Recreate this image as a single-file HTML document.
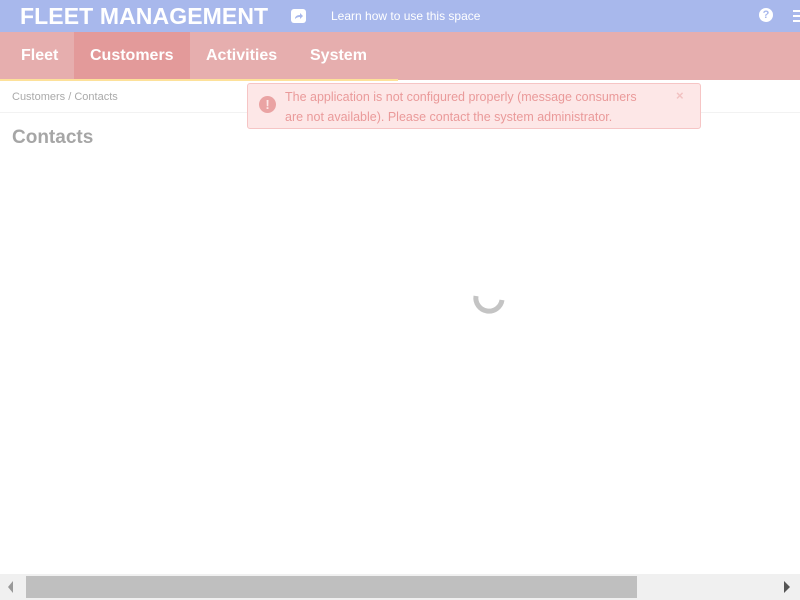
<!DOCTYPE html>
<html><head><style>
*{margin:0;padding:0;box-sizing:border-box}
body{width:800px;height:600px;overflow:hidden;background:#fff;font-family:"Liberation Sans",sans-serif;position:relative}
.top{position:absolute;left:0;top:0;width:800px;height:32px;background:#a8b8ec;color:#fff}
.title{position:absolute;left:20px;top:3px;font-size:23px;font-weight:bold;letter-spacing:0.1px}
.share{position:absolute;left:291px;top:9px;width:15px;height:14px;background:#fff;border-radius:3px}
.learn{position:absolute;left:331px;top:9px;font-size:12px}
.help{position:absolute;left:759px;top:8px;width:14px;height:14px;border-radius:50%;background:#fff;color:#a8b8ec;font-size:11px;font-weight:bold;text-align:center;line-height:14px}
.menu{position:absolute;left:793px;top:10px;width:8px;height:12px;border-top:2px solid #fff;border-bottom:2px solid #fff}
.menu:after{content:"";position:absolute;left:0;top:3px;width:8px;height:2px;background:#fff}
.nav{position:absolute;left:0;top:32px;width:800px;height:48px;background:#e6aeae}
.nav span{position:absolute;top:0;height:48px;line-height:48px;color:#fff;font-weight:bold;font-size:16px}
.act{background:#e39a9a}
.yl{position:absolute;left:0;top:79px;width:398px;height:2px;background:#fde19a}
.crumb{position:absolute;left:12px;top:91px;font-size:11px;color:#aaa}
.hr{position:absolute;left:0;top:112px;width:800px;height:1px;background:#f2f2f2}
h1{position:absolute;left:12px;top:127px;font-size:19px;color:#a6a6a6;font-weight:bold}
.alert{position:absolute;left:247px;top:83px;width:454px;height:46px;background:#fde7e7;border:1px solid #f6c5c5;border-radius:3px;color:#ea9a9a;font-size:12.5px;line-height:20px;padding:3px 45px 0 37px}
.ic{position:absolute;left:11px;top:12px;width:17px;height:17px;border-radius:50%;background:#eaa3a3;color:#fde7e7;font-weight:bold;font-size:13px;text-align:center;line-height:17px}
.x{position:absolute;left:428px;top:2px;color:#f2c2c2;font-size:13px;font-weight:bold}
.sb{position:absolute;left:0;top:574px;width:800px;height:26px;background:#f0f0f0}
.th{position:absolute;left:26px;top:576px;width:611px;height:22px;background:#bfbfbf}
</style></head><body>
<div class="top"><div class="title">FLEET MANAGEMENT</div><div class="share"><svg width="15" height="14" viewBox="0 0 15 14"><path d="M4 10 Q4 6 9 6 L9 4 L12 7 L9 10 L9 8 Q6 8 4 10Z" fill="#a8b8ec"/></svg></div><div class="learn">Learn how to use this space</div><div class="help">?</div><div class="menu"></div></div>
<div class="nav"><span style="left:0;width:74px;padding-left:21px">Fleet</span><span class="act" style="left:74px;width:116px;padding-left:16px">Customers</span><span style="left:206px">Activities</span><span style="left:310px">System</span></div>
<div class="yl"></div>
<div class="crumb">Customers / Contacts</div>
<div class="hr"></div>
<h1>Contacts</h1>
<div class="alert"><div class="ic">!</div><div class="x">×</div>The application is not configured properly (message consumers are not available). Please contact the system administrator.</div>
<svg style="position:absolute;left:470px;top:284px" width="40" height="36"><path d="M6 12 A13 13 0 0 0 32 16" fill="none" stroke="#c4c4c4" stroke-width="5"/></svg>
<div class="sb"></div><div class="th"></div>
<svg style="position:absolute;left:7px;top:580px" width="8" height="14"><path d="M6 1 L1 7 L6 13Z" fill="#999"/></svg>
<svg style="position:absolute;left:783px;top:580px" width="8" height="14"><path d="M1 1 L7 7 L1 13Z" fill="#555"/></svg>
</body></html>
